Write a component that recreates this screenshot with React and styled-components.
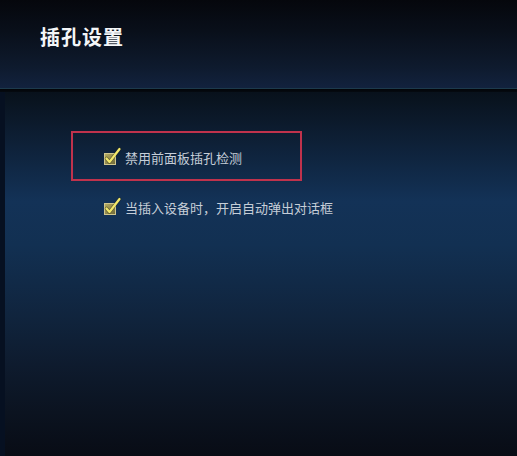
import React from 'react';
import styled, { createGlobalStyle } from 'styled-components';

const GlobalStyle = createGlobalStyle`
  html, body {
    margin: 0;
    padding: 0;
    background: #080c15;
  }
  body {
    font-family: "Noto Sans CJK SC", "Liberation Sans", sans-serif;
  }
`;

const Page = styled.div`
  width: 517px;
  height: 456px;
  display: flex;
  flex-direction: column;
  overflow: hidden;
`;

const Header = styled.div`
  height: 89px;
  box-sizing: border-box;
  padding: 22px 0 0 40px;
  background: linear-gradient(to bottom, #05070c 0%, #090f1a 35%, #0e1a2d 75%, #12223e 100%);
  border-bottom: 1px solid #1d3a4c;
`;

const Title = styled.h1`
  margin: 0;
  font-size: 20px;
  line-height: 30px;
  font-weight: 700;
  color: #f4f6f8;
  letter-spacing: 1px;
`;

const Divider = styled.div`
  height: 3px;
  background: linear-gradient(to bottom, #020408, #050a10);
`;

const Content = styled.div`
  flex: 1;
  display: flex;
  flex-direction: column;
  padding: 39px 0 0 66px;
  border-left: 5px solid #061021;
  background: linear-gradient(
    to bottom,
    #08111b 0%,
    #0d1e33 12%,
    #133257 30%,
    #123052 42%,
    #10243d 62%,
    #0e1b2e 75%,
    #0b1320 88%,
    #080c15 100%
  );
`;

const Option = styled.div`
  width: 231px;
  height: 50px;
  box-sizing: border-box;
  display: flex;
  align-items: center;
  gap: 3px;
  padding-left: 31px;
  border: 2px solid ${p => (p.$highlighted ? '#c0324c' : 'transparent')};
`;

const Check = styled.svg`
  flex-shrink: 0;
  width: 18px;
  height: 18px;
`;

const Label = styled.span`
  font-size: 13px;
  line-height: 16px;
  color: #c6ced8;
  margin-top: 4px;
  white-space: nowrap;
`;

const CheckIcon = () => (
  <Check viewBox="0 0 18 18">
    <defs>
      <linearGradient id="boxFill" x1="0" y1="0" x2="1" y2="1">
        <stop offset="0" stopColor="#b8ae62" />
        <stop offset="1" stopColor="#6d6838" />
      </linearGradient>
    </defs>
    <rect x="0.5" y="6.5" width="11" height="11" fill="url(#boxFill)" stroke="#cfc68e" strokeWidth="1" />
    <path d="M2.5 11.5 L5.5 15 L15.5 2" fill="none" stroke="#2a2a16" strokeWidth="3.6" strokeLinecap="round" strokeLinejoin="round" opacity="0.5" />
    <path d="M2.5 11.5 L5.5 15 L15.5 2" fill="none" stroke="#f2e86a" strokeWidth="2.2" strokeLinecap="round" strokeLinejoin="round" />
  </Check>
);

const options = [
  { label: '禁用前面板插孔检测', highlighted: true },
  { label: '当插入设备时，开启自动弹出对话框', highlighted: false },
];

export default function App() {
  return (
    <Page>
      <GlobalStyle />
      <Header>
        <Title>插孔设置</Title>
      </Header>
      <Divider />
      <Content>
        {options.map(opt => (
          <Option key={opt.label} $highlighted={opt.highlighted}>
            <CheckIcon />
            <Label>{opt.label}</Label>
          </Option>
        ))}
      </Content>
    </Page>
  );
}
